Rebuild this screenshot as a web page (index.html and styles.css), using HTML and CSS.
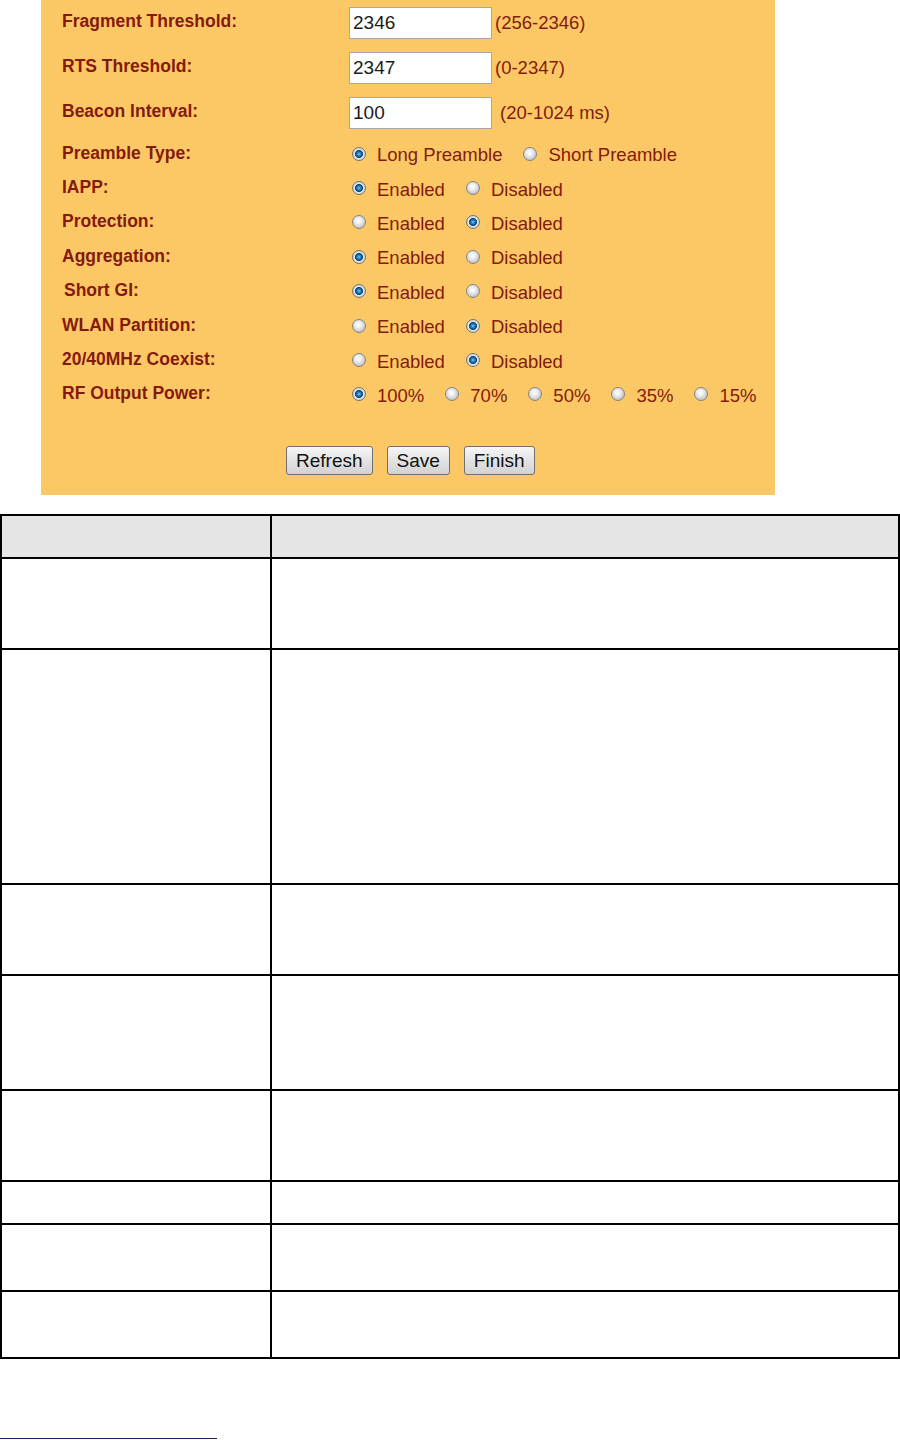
FILE: index.html
```html
<!DOCTYPE html>
<html lang="en">
<head>
<meta charset="UTF-8">
<title>Wireless Advanced Settings</title>
<link rel="stylesheet" href="styles.css">
</head>
<body>

<div class="settings-panel">
    <div class="field-row tall">
        <span class="field-label">Fragment Threshold:</span>
        <input class="text-input" type="text" value="2346">
        <span class="range-hint">(256-2346)</span>
    </div>
    <div class="field-row tall">
        <span class="field-label">RTS Threshold:</span>
        <input class="text-input" type="text" value="2347">
        <span class="range-hint">(0-2347)</span>
    </div>
    <div class="field-row tall">
        <span class="field-label">Beacon Interval:</span>
        <input class="text-input" type="text" value="100">
        <span class="range-hint wide">(20-1024 ms)</span>
    </div>

    <div class="field-row first-radio">
        <span class="field-label">Preamble Type:</span>
        <span class="option"><span class="radio checked"></span>Long Preamble</span>
        <span class="option"><span class="radio"></span>Short Preamble</span>
    </div>
    <div class="field-row">
        <span class="field-label">IAPP:</span>
        <span class="option"><span class="radio checked"></span>Enabled</span>
        <span class="option"><span class="radio"></span>Disabled</span>
    </div>
    <div class="field-row">
        <span class="field-label">Protection:</span>
        <span class="option"><span class="radio"></span>Enabled</span>
        <span class="option"><span class="radio checked"></span>Disabled</span>
    </div>
    <div class="field-row">
        <span class="field-label">Aggregation:</span>
        <span class="option"><span class="radio checked"></span>Enabled</span>
        <span class="option"><span class="radio"></span>Disabled</span>
    </div>
    <div class="field-row">
        <span class="field-label indent">Short GI:</span>
        <span class="option"><span class="radio checked"></span>Enabled</span>
        <span class="option"><span class="radio"></span>Disabled</span>
    </div>
    <div class="field-row">
        <span class="field-label">WLAN Partition:</span>
        <span class="option"><span class="radio"></span>Enabled</span>
        <span class="option"><span class="radio checked"></span>Disabled</span>
    </div>
    <div class="field-row">
        <span class="field-label">20/40MHz Coexist:</span>
        <span class="option"><span class="radio"></span>Enabled</span>
        <span class="option"><span class="radio checked"></span>Disabled</span>
    </div>
    <div class="field-row">
        <span class="field-label">RF Output Power:</span>
        <span class="option"><span class="radio checked"></span>100%</span>
        <span class="option"><span class="radio"></span>70%</span>
        <span class="option"><span class="radio"></span>50%</span>
        <span class="option"><span class="radio"></span>35%</span>
        <span class="option"><span class="radio"></span>15%</span>
    </div>

    <div class="button-row">
        <button class="btn">Refresh</button>
        <button class="btn">Save</button>
        <button class="btn">Finish</button>
    </div>
</div>

<table class="desc-table">
    <tr class="head"><td class="name"></td><td></td></tr>
    <tr class="h91"><td class="name"></td><td></td></tr>
    <tr class="h235"><td class="name"></td><td></td></tr>
    <tr class="h91"><td class="name"></td><td></td></tr>
    <tr class="h115"><td class="name"></td><td></td></tr>
    <tr class="h91"><td class="name"></td><td></td></tr>
    <tr class="h43"><td class="name"></td><td></td></tr>
    <tr class="h67"><td class="name"></td><td></td></tr>
    <tr class="h67"><td class="name"></td><td></td></tr>
</table>

<div class="footnote-rule"></div>

</body>
</html>
```

FILE: styles.css
```css
body {
    margin: 0;
    background: #fff;
    font-family: "Liberation Sans", Arial, sans-serif;
}

.settings-panel {
    margin-left: 41px;
    width: 734px;
    height: 495px;
    background-color: #fcc866;
    padding-left: 21px;
    box-sizing: border-box;
    color: #851a0c;
}

.field-row {
    display: flex;
    align-items: center;
    height: 34.4px;
}

.field-row.tall {
    height: 45px;
}

.field-row.first-radio {
    margin-top: 2px;
}

.field-label {
    width: 287px;
    flex: none;
    font-weight: bold;
    font-size: 17.5px;
    margin-top: -2px;
}

.field-label.indent {
    padding-left: 2px;
    box-sizing: border-box;
}

.text-input {
    width: 143px;
    height: 32px;
    box-sizing: border-box;
    border: 1px solid #a8a8a8;
    background: #fff;
    padding: 0 3px;
    margin: 0;
    font-family: "Liberation Sans", Arial, sans-serif;
    font-size: 19px;
    color: #1a1a1a;
}

.range-hint {
    margin-left: 3px;
    font-size: 18.5px;
}

.range-hint.wide {
    margin-left: 8px;
}

.option {
    display: flex;
    align-items: center;
    font-size: 18.5px;
    margin-right: 21px;
    margin-top: 2px;
}

.field-label + .option {
    margin-left: 3px;
}

.radio {
    width: 14px;
    height: 14px;
    box-sizing: border-box;
    border-radius: 50%;
    border: 1px solid #858585;
    background: radial-gradient(circle at 45% 40%, #ffffff 0, #eeeeee 3px, #c4c4c4 7px);
    margin-right: 11px;
    margin-top: -3px;
}

.radio.checked {
    border-color: #777;
    background: radial-gradient(circle at 50% 50%, #7fc6f2 0, #1d7ab9 2px, #0b4670 3.6px, #e6e6e6 4.4px, #c2c2c2 7px);
}

.button-row {
    display: flex;
    gap: 14px;
    margin-top: 34px;
    padding-left: 224px;
}

.btn {
    height: 29px;
    padding: 0 9px;
    border: 1px solid #707070;
    border-radius: 3px;
    background: linear-gradient(#f6f6f6, #e3e3e3 50%, #d2d2d2);
    font-family: "Liberation Sans", Arial, sans-serif;
    font-size: 19px;
    color: #111;
}

.desc-table {
    margin-top: 19px;
    width: 900px;
    border-collapse: collapse;
}

.desc-table td {
    border: 2px solid #000;
    padding: 0;
}

.desc-table td.name {
    width: 268px;
}

.desc-table tr.head td {
    background-color: #e5e5e5;
    height: 41px;
}

.h91 td { height: 89px; }
.h235 td { height: 233px; }
.h115 td { height: 113px; }
.h43 td { height: 41px; }
.h67 td { height: 65px; }

.footnote-rule {
    margin-top: 79px;
    width: 217px;
    height: 1px;
    background-color: #1a1a5e;
}
```
